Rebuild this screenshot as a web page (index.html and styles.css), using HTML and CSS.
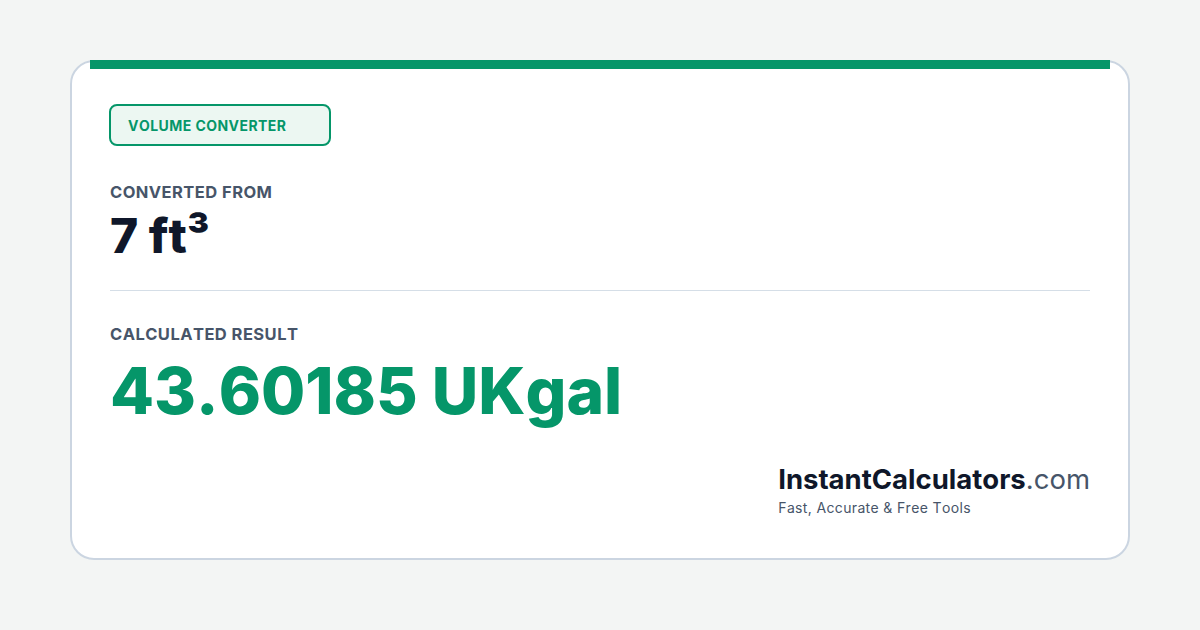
FILE: index.html
```html
<!DOCTYPE html>
<html lang="en">
<head>
  <meta charset="UTF-8" />
  <meta name="viewport" content="width=device-width, initial-scale=1.0" />
  <title>Volume Converter - InstantCalculators.com</title>
  <link rel="stylesheet" href="styles.css">
</head>
<body>
  <div class="card">
    <div class="accent"></div>

    <span class="badge">VOLUME CONVERTER</span>

    <div class="label from-label">CONVERTED FROM</div>
    <div class="from-value">7 ft³</div>

    <hr class="divider">

    <div class="label">CALCULATED RESULT</div>
    <div class="result">43.60185 UKgal</div>

    <div class="brand">
      <div class="brand-name"><strong>InstantCalculators</strong>.com</div>
      <div class="brand-tag">Fast, Accurate &amp; Free Tools</div>
    </div>
  </div>
</body>
</html>
```

FILE: styles.css
```css
body {
  margin: 0;
  padding: 60px 70px;
  background-color: #f3f5f4;
  font-family: Inter, 'Noto Sans', sans-serif;
  font-kerning: none;
}

.card {
  box-sizing: border-box;
  width: 1060px;
  height: 500px;
  background-color: #fff;
  border: 2px solid #cbd5e1;
  border-radius: 24px;
  padding: 0 38px;
  display: flex;
  flex-direction: column;
  align-items: flex-start;
}

.accent {
  align-self: stretch;
  height: 9px;
  margin: -2px -20px 35px;
  background-color: #059669;
}

.badge {
  box-sizing: border-box;
  width: 222px;
  height: 42px;
  margin-left: -1px;
  padding: 0 17px;
  border: 2px solid #059669;
  border-radius: 8px;
  background-color: #ecf7f2;
  color: #059669;
  font-size: 14px;
  font-weight: 700;
  line-height: 39px;
  letter-spacing: 0.45px;
}

.label {
  color: #475569;
  font-size: 16.5px;
  font-weight: 700;
  line-height: 20px;
  letter-spacing: 0.45px;
}

.from-label {
  margin-top: 36px;
}

.from-value {
  margin-top: 10px;
  color: #0f172a;
  font-size: 48px;
  font-weight: 800;
  line-height: 48px;
}

.divider {
  align-self: stretch;
  margin: 30px 0 33px;
  border: none;
  height: 1px;
  background-color: #d5dee7;
}

.result {
  margin-top: 15px;
  color: #059669;
  font-size: 64px;
  font-weight: 800;
  line-height: 64px;
}

.brand {
  align-self: flex-end;
  margin-top: 41px;
}

.brand-name {
  color: #475569;
  font-size: 27.5px;
  line-height: 31px;
}

.brand-name strong {
  color: #0f172a;
  font-weight: 700;
}

.brand-tag {
  margin-top: 3px;
  color: #475569;
  font-size: 14px;
  line-height: 20px;
  letter-spacing: 0.35px;
}
```
